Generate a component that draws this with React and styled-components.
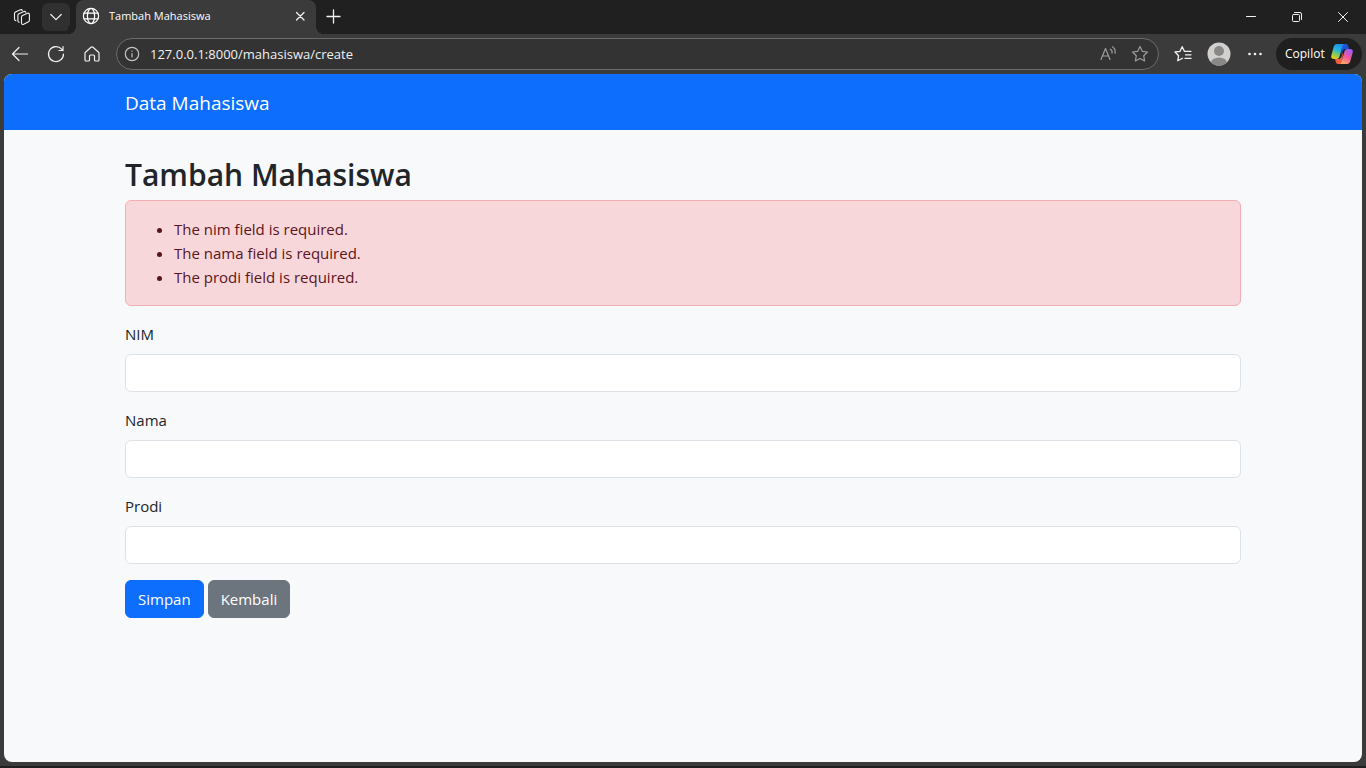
import React from "react";
import styled, { createGlobalStyle } from "styled-components";

const GlobalStyle = createGlobalStyle`
  *, *::before, *::after { box-sizing: border-box; }
  body {
    margin: 0;
    background: #3b3b3b;
    color: #212529;
    font-family: "Segoe UI", "Open Sans", "Noto Sans", sans-serif;
    font-size: 15px;
    line-height: 24px;
  }
  button, input { font: inherit; }
  svg { display: block; flex: none; }
`;

const Window = styled.div`
  display: flex;
  flex-direction: column;
  min-height: 100vh;
  border-bottom: 2px solid #202020;
`;

const TabStrip = styled.header`
  display: flex;
  align-items: center;
  height: 34px;
  background: #202020;
  color: #fff;
`;

const IconButton = styled.button`
  display: flex;
  align-items: center;
  justify-content: center;
  flex: none;
  width: ${(p) => p.$width || 36}px;
  height: ${(p) => p.$height || 32}px;
  padding: 0;
  border: 0;
  border-radius: 6px;
  background: ${(p) => p.$fill || "transparent"};
  color: ${(p) => p.$tone || "#f2f2f2"};
`;

const StripTools = styled.div`
  display: flex;
  align-items: center;
  gap: 2px;
  padding: 0 6px 0 4px;
`;

const Tab = styled.div`
  position: relative;
  display: flex;
  align-items: center;
  width: 240px;
  height: 34px;
  padding: 0 4px 2px 6px;
  border-radius: 8px 8px 0 0;
  background: #3b3b3b;
  font-size: 11px;
  &::before,
  &::after {
    content: "";
    position: absolute;
    bottom: 0;
    width: 8px;
    height: 8px;
  }
  &::before {
    right: 100%;
    background: radial-gradient(circle at 0 0, #202020 8px, #3b3b3b 8px);
  }
  &::after {
    left: 100%;
    background: radial-gradient(circle at 100% 0, #202020 8px, #3b3b3b 8px);
  }
`;

const TabTitle = styled.span`
  flex: 1;
  padding-left: 9px;
`;

const WindowControls = styled.div`
  display: flex;
  margin-left: auto;
`;

const Toolbar = styled.div`
  display: flex;
  align-items: center;
  height: 40px;
  padding: 0 4px 0 2px;
  background: #3b3b3b;
`;

const AddressBar = styled.label`
  display: flex;
  align-items: center;
  flex: 1;
  height: 32px;
  margin: 0 6px;
  padding: 0 2px 0 7px;
  border: 1px solid #6b6b6b;
  border-radius: 16px;
  background: #333;
  color: #c4c4c4;
`;

const AddressInput = styled.input`
  flex: 1;
  min-width: 0;
  padding: 0 0 0 10px;
  border: 0;
  outline: 0;
  background: transparent;
  color: #f0f0f0;
  font-size: 13px;
`;

const CopilotButton = styled.button`
  display: flex;
  align-items: center;
  justify-content: space-between;
  width: 86px;
  height: 32px;
  margin-left: 3px;
  padding: 0 8px 0 9px;
  border: 0;
  border-radius: 16px;
  background: #1f1f1f;
  color: #fff;
  font-size: 12px;
`;

const Viewport = styled.div`
  flex: 1;
  margin: 0 4px 4px;
  border-radius: 8px;
  overflow: hidden;
  background: #f8f9fa;
`;

const Container = styled.div`
  max-width: 1140px;
  margin: 0 auto;
  padding: 0 12px;
`;

const Navbar = styled.nav`
  padding: 14px 0 12px;
  background: #0d6efd;
`;

const Brand = styled.a`
  display: block;
  color: #fff;
  font-size: 19px;
  line-height: 30px;
  text-decoration: none;
`;

const Main = styled.main`
  padding: 24px 0;
`;

const Title = styled.h1`
  margin: 0 0 4px;
  font-size: 30px;
  font-weight: 600;
  line-height: 42px;
`;

const Alert = styled.div`
  margin-bottom: 16px;
  padding: 16px;
  border: 1px solid #f1aeb5;
  border-radius: 6px;
  background: #f8d7da;
  color: #58151c;
`;

const ErrorList = styled.ul`
  margin: 0;
  padding-left: 32px;
`;

const Field = styled.div`
  margin-bottom: 16px;
`;

const FieldLabel = styled.label`
  display: block;
  margin-bottom: 8px;
`;

const TextInput = styled.input`
  display: block;
  width: 100%;
  height: 38px;
  padding: 6px 12px;
  border: 1px solid #dee2e6;
  border-radius: 6px;
  background: #fff;
  color: inherit;
`;

const Actions = styled.div`
  display: flex;
  gap: 4px;
`;

const Button = styled.button`
  padding: 6px 12px;
  border: 1px solid ${(p) => p.$color};
  border-radius: 6px;
  background: ${(p) => p.$color};
  color: #fff;
  line-height: 24px;
  text-decoration: none;
`;

const Icon = ({ size = 20, stroke = 1.2, children }) => (
  <svg
    width={size}
    height={size}
    viewBox={`0 0 ${size} ${size}`}
    fill="none"
    stroke="currentColor"
    strokeWidth={stroke}
    strokeLinecap="round"
    strokeLinejoin="round"
    aria-hidden="true"
  >
    {children}
  </svg>
);

const WorkspacesIcon = () => (
  <Icon stroke={1.1}>
    <path d="M9.500 10c0-.7.300-1.200 1-1.500l5-2.200c1-.4 1.900.1 1.900 1.100v5.800c0 .7-.3 1.200-.9 1.600l-4.800 2.500c-1.100.6-2.200 0-2.200-1.200z" />
    <path d="M7.300 15.300c-.9-.1-1.400-.6-1.400-1.500V8.200c0-.7.300-1.200 1-1.500l5-2.200c.9-.3 1.600 0 1.900.7" />
    <path d="M3.900 13.600c-.9-.1-1.400-.6-1.400-1.500V6.500c0-.7.300-1.200 1-1.500l4.900-2.200c.9-.3 1.600 0 1.900.7" />
  </Icon>
);

const GlobeIcon = () => (
  <Icon size={18} stroke={1.2}>
    <circle cx="9" cy="9" r="7.600" />
    <ellipse cx="9" cy="9" rx="3.600" ry="7.600" />
    <path d="M2 6.200h14M2 11.800h14" />
  </Icon>
);

const CopilotIcon = () => (
  <svg width="24" height="22" viewBox="0 0 24 22" aria-hidden="true">
    <defs>
      <linearGradient id="cool" x1="0.6" y1="0" x2="0.2" y2="1">
        <stop offset="0" stopColor="#1b8fe8" />
        <stop offset="0.4" stopColor="#26b5dc" />
        <stop offset="0.7" stopColor="#8bcb55" />
        <stop offset="1" stopColor="#f5cb18" />
      </linearGradient>
      <linearGradient id="warm" x1="0.7" y1="0" x2="0.3" y2="1">
        <stop offset="0" stopColor="#9d5cf5" />
        <stop offset="0.5" stopColor="#ec5a9c" />
        <stop offset="1" stopColor="#ffa66b" />
      </linearGradient>
    </defs>
    <path d="M12 1h4c1.300 0 1.800.7 2.200 2l.8 3h-3.500c-1.600 0-2.500.8-3 2.400L11 13z" fill="#1a55d8" />
    <path d="M12 21H8c-1.300 0-1.800-.7-2.200-2L5 16h3.500c1.600 0 2.500-.8 3-2.400L13 9z" fill="#f0603f" />
    <path d="M7 1h7.500c-1.300.3-1.800 1.300-2.200 2.600L9.700 13c-.5 1.900-1.400 3-3.200 3H4c-2.300 0-3.300-1.300-2.700-3.500l2.200-8C4.200 2.200 5 1 7 1z" fill="url(#cool)" />
    <path d="M17 21H9.500c1.300-.3 1.800-1.300 2.200-2.600L14.300 9c.5-1.900 1.400-3 3.200-3H20c2.300 0 3.300 1.300 2.700 3.500l-2.200 8C19.800 19.800 19 21 17 21z" fill="url(#warm)" />
  </svg>
);

const Avatar = () => (
  <svg width="24" height="24" viewBox="0 0 24 24" aria-hidden="true">
    <clipPath id="avatar"><circle cx="12" cy="12" r="11.500" /></clipPath>
    <g clipPath="url(#avatar)">
      <path d="M0 0h24v24H0z" fill="#d2d0ce" />
      <circle cx="12" cy="9" r="5" fill="#8a8886" />
      <ellipse cx="12" cy="21" rx="8" ry="5.500" fill="#8a8886" />
    </g>
  </svg>
);

const fields = [
  { name: "nim", label: "NIM" },
  { name: "nama", label: "Nama" },
  { name: "prodi", label: "Prodi" },
];

const starPath = "M10 2.500l2.300 4.800 5.200.7-3.800 3.700.9 5.300-4.600-2.500L5.400 17l.9-5.300L2.500 8l5.200-.7z";

export default function App() {
  return (
    <>
      <GlobalStyle />
      <Window>
        <TabStrip>
          <StripTools>
            <IconButton aria-label="Workspaces"><WorkspacesIcon /></IconButton>
            <IconButton aria-label="Tab actions" $width={28} $height={28} $fill="#303030">
              <Icon size={12}><path d="M.8 3.500 6 8.700l5.200-5.200" /></Icon>
            </IconButton>
          </StripTools>
          <Tab>
            <GlobeIcon />
            <TabTitle>Tambah Mahasiswa</TabTitle>
            <IconButton aria-label="Close tab" $width={24} $height={24}>
              <Icon size={10} stroke={1.300}><path d="m1.500 1.500 7.500 7.500M9 1.500 1.500 9" /></Icon>
            </IconButton>
          </Tab>
          <IconButton aria-label="New tab">
            <Icon size={16} stroke={1.300}><path d="M7.500 1v13M1 7.500h13" /></Icon>
          </IconButton>
          <WindowControls>
            <IconButton aria-label="Minimize" $width={46}>
              <Icon size={10} stroke={1}><path d="M.5 4.500h9" /></Icon>
            </IconButton>
            <IconButton aria-label="Restore" $width={46}>
              <Icon size={10} stroke={1}>
                <rect x=".5" y="2.500" width="7" height="7" rx="1" />
                <path d="M2.500.5H8A1.500 1.500 0 0 1 9.500 2v5.500" />
              </Icon>
            </IconButton>
            <IconButton aria-label="Close" $width={46}>
              <Icon size={10} stroke={1}><path d="m.5.5 9 9M9.500.5l-9 9" /></Icon>
            </IconButton>
          </WindowControls>
        </TabStrip>

        <Toolbar>
          <IconButton aria-label="Back">
            <Icon><path d="M17.500 10h-15M9 3.500 2.500 10 9 16.500" /></Icon>
          </IconButton>
          <IconButton aria-label="Refresh">
            <Icon><path d="M17.500 10A7.500 7.500 0 1 1 15.700 5.200L17 6.500M17 2.500v4h-4" /></Icon>
          </IconButton>
          <IconButton aria-label="Home">
            <Icon>
              <path d="M9 3.300a1.500 1.500 0 0 1 2 0l5.500 4.900c.3.300.5.700.5 1.100V16a1 1 0 0 1-1 1h-2.500a1 1 0 0 1-1-1v-4a1 1 0 0 0-1-1h-3a1 1 0 0 0-1 1v4a1 1 0 0 1-1 1H4a1 1 0 0 1-1-1V9.300c0-.4.200-.8.500-1.100z" />
            </Icon>
          </IconButton>
          <AddressBar>
            <Icon size={16} stroke={1.200}>
              <circle cx="8" cy="8" r="6.700" />
              <path d="M8 7.500v3.500M8 5v.2" />
            </Icon>
            <AddressInput aria-label="Address" defaultValue="127.0.0.1:8000/mahasiswa/create" />
            <IconButton aria-label="Read aloud" $width={32} $height={28} $tone="#9c9c9c">
              <Icon stroke={1.200}>
                <path d="M3 15.500 7.500 4.500 12 15.500M4.600 12h5.800M12.300 5.200c1.500.8 2.100 2.200 1.700 3.900M14.500 2.800c2.200 1.500 3.100 3.900 2.500 6.600" />
              </Icon>
            </IconButton>
            <IconButton aria-label="Add to favorites" $width={32} $height={28} $tone="#9c9c9c">
              <Icon><path d={starPath} /></Icon>
            </IconButton>
          </AddressBar>
          <IconButton aria-label="Favorites">
            <Icon stroke={1.300}>
              <path d="M9.500 14.200 4.700 16.800l.9-5.100L2 8l5-.7 2.200-4.600 2.200 4.600h6.600M12.500 10.800H18M12 14.400h6" />
            </Icon>
          </IconButton>
          <IconButton aria-label="Profile"><Avatar /></IconButton>
          <IconButton aria-label="Settings and more">
            <Icon>
              <g fill="currentColor" stroke="none">
                <circle cx="4.500" cy="10" r="1.300" />
                <circle cx="10" cy="10" r="1.300" />
                <circle cx="15.500" cy="10" r="1.300" />
              </g>
            </Icon>
          </IconButton>
          <CopilotButton>Copilot<CopilotIcon /></CopilotButton>
        </Toolbar>

        <Viewport>
          <Navbar>
            <Container><Brand href="#">Data Mahasiswa</Brand></Container>
          </Navbar>
          <Container>
            <Main>
              <Title>Tambah Mahasiswa</Title>
              <Alert role="alert">
                <ErrorList>
                  {fields.map((f) => <li key={f.name}>The {f.name} field is required.</li>)}
                </ErrorList>
              </Alert>
              <form onSubmit={(e) => e.preventDefault()}>
                {fields.map((f) => (
                  <Field key={f.name}>
                    <FieldLabel htmlFor={f.name}>{f.label}</FieldLabel>
                    <TextInput id={f.name} name={f.name} type="text" />
                  </Field>
                ))}
                <Actions>
                  <Button type="submit" $color="#0d6efd">Simpan</Button>
                  <Button as="a" href="#" $color="#6c757d">Kembali</Button>
                </Actions>
              </form>
            </Main>
          </Container>
        </Viewport>
      </Window>
    </>
  );
}
